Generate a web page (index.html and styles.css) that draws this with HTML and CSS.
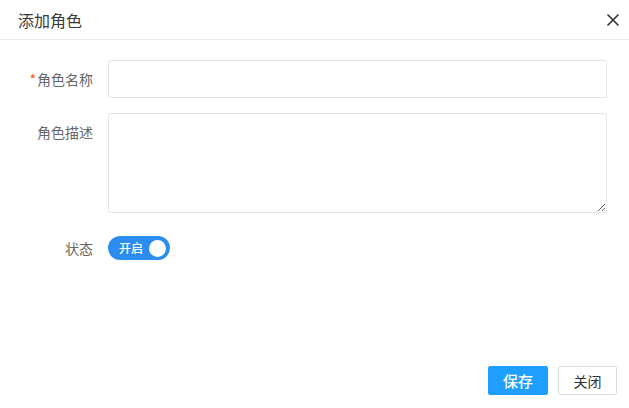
FILE: index.html
```html
<!DOCTYPE html>
<html lang="zh">
<head>
<meta charset="utf-8">
<link rel="stylesheet" href="styles.css">
</head>
<body>
<div class="dialog">
  <div class="header">
    <span class="title">添加角色</span>
    <svg class="close" width="14" height="14" viewBox="0 0 14 14"><path d="M1.5 1.5 L12.5 12.5 M12.5 1.5 L1.5 12.5" stroke="#333" stroke-width="1.6" fill="none"/></svg>
  </div>
  <form class="form">
    <div class="row">
      <label class="label"><span class="req">*</span>角色名称</label>
      <input class="input" type="text">
    </div>
    <div class="row">
      <label class="label">角色描述</label>
      <textarea class="textarea"></textarea>
    </div>
    <div class="row row-switch">
      <label class="label">状态</label>
      <div class="switch"><span class="switch-text">开启</span><span class="knob"></span></div>
    </div>
  </form>
  <div class="footer">
    <button class="btn btn-primary" type="button">保存</button>
    <button class="btn btn-default" type="button">关闭</button>
  </div>
</div>
</body>
</html>
```
FILE: styles.css
```css
html, body {
  margin: 0;
  padding: 0;
  background: #fff;
}
body {
  font-family: "Noto Sans CJK SC", "Noto Sans", sans-serif;
  color: #333;
}
.dialog {
  display: flex;
  flex-direction: column;
  height: 408px;
  box-sizing: border-box;
}
.header {
  height: 39px;
  border-bottom: 1px solid #ececec;
  display: flex;
  align-items: center;
  justify-content: space-between;
  padding: 0 9px 0 18px;
}
.title {
  font-size: 16px;
  color: #3a3a3a;
  line-height: 1;
}
.close {
  display: block;
}
.form {
  padding: 20px 22px 0 0;
  margin: 0;
}
.row {
  display: flex;
  align-items: flex-start;
  margin-bottom: 15px;
}
.label {
  width: 93px;
  padding-right: 15px;
  text-align: right;
  font-size: 14px;
  line-height: 38px;
  color: #666;
  flex: none;
}
.req {
  color: #ff5722;
  margin-right: 1px;
}
.input, .textarea {
  flex: 1;
  border: 1px solid #e6e6e6;
  border-radius: 2px;
  box-sizing: border-box;
  font-family: inherit;
  font-size: 14px;
  outline: none;
  margin: 0;
  padding: 0 10px;
}
.input {
  height: 38px;
}
.textarea {
  height: 100px;
  padding: 6px 10px;
}
.row-switch {
  margin-top: 23px;
  align-items: center;
}
.row-switch .label {
  line-height: 24px;
}
.switch {
  width: 62px;
  height: 24px;
  border-radius: 12px;
  background: #2d8cf0;
  display: flex;
  align-items: center;
  justify-content: space-between;
  padding: 0 4px 0 11px;
  box-sizing: border-box;
}
.switch-text {
  color: #fff;
  font-size: 12px;
  font-weight: 500;
  line-height: 1;
}
.knob {
  width: 17px;
  height: 17px;
  border-radius: 50%;
  background: #fff;
}
.footer {
  margin-top: auto;
  display: flex;
  justify-content: flex-end;
  gap: 10px;
  padding: 0 12px 13px 0;
}
.btn {
  width: 60px;
  height: 29px;
  border-radius: 2px;
  font-family: inherit;
  font-size: 14px;
  padding: 0;
  box-sizing: border-box;
  cursor: pointer;
}
.btn-primary {
  background: #1e9fff;
  border: 1px solid #1e9fff;
  color: #fff;
  font-size: 15px;
  font-weight: 500;
}
.btn-default {
  width: 59px;
  background: #fff;
  border: 1px solid #dedede;
  color: #333;
}
```
